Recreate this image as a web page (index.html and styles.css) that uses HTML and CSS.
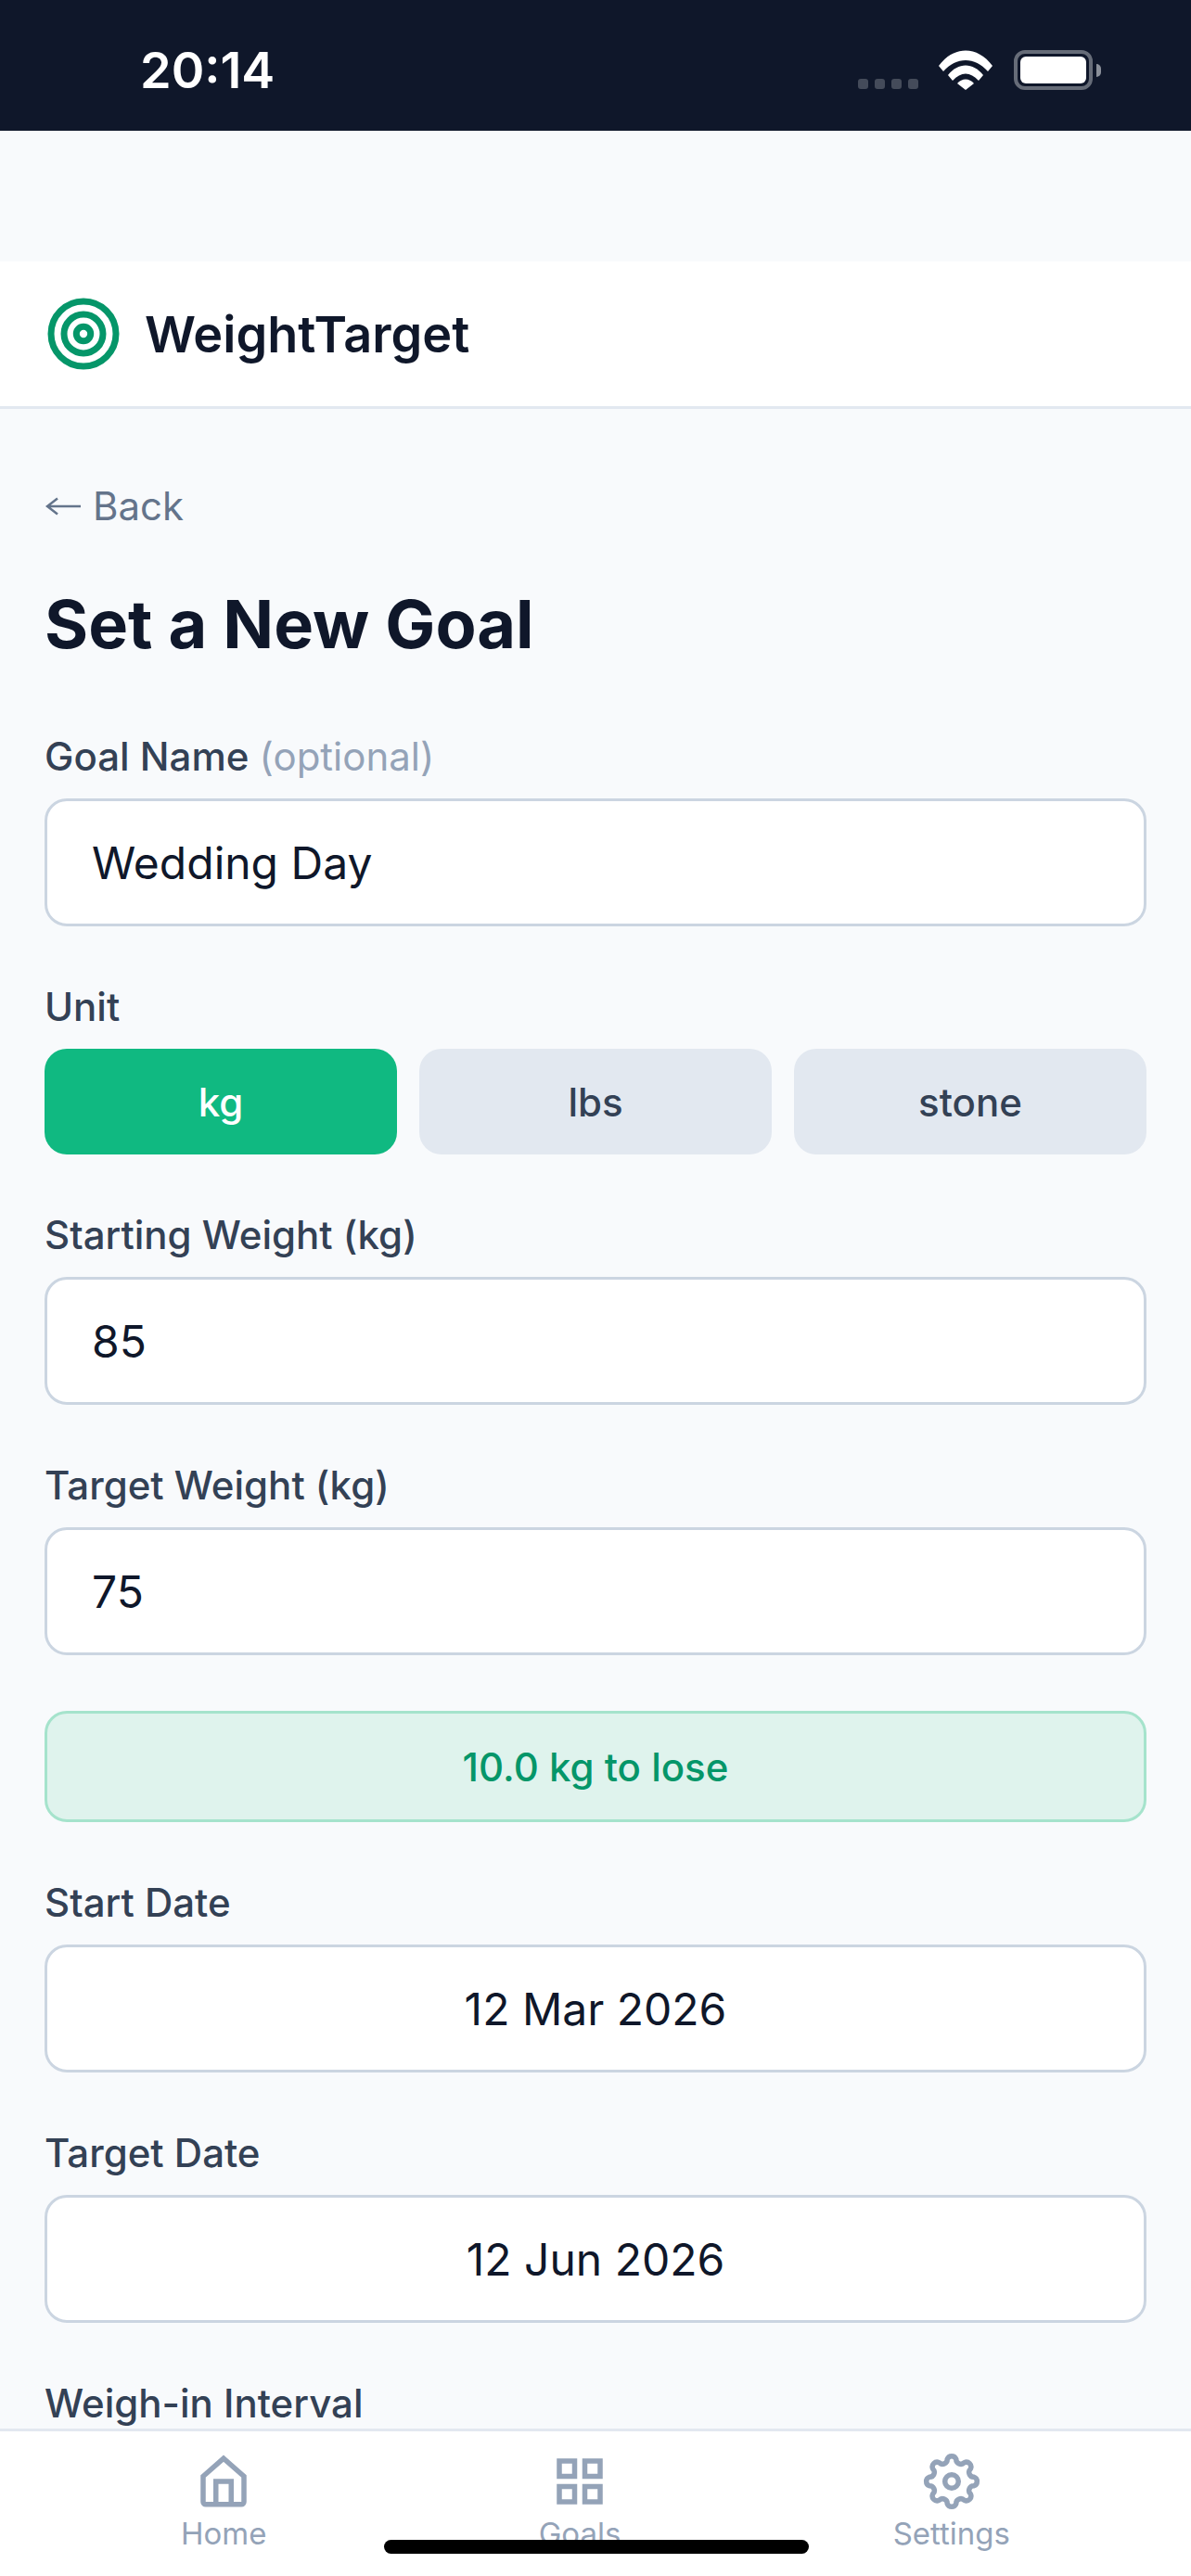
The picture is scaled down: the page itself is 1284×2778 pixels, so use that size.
FILE: index.html
```html
<!DOCTYPE html>
<html lang="en">
<head>
    <meta charset="UTF-8">
    <meta name="viewport" content="width=device-width, initial-scale=1.0">
    <title>WeightTarget</title>
    <link rel="stylesheet" href="styles.css">
</head>
<body>
    <div class="status-bar">
        <span class="time">20:14</span>
        <div class="status-icons">
            <div class="signal"><i></i><i></i><i></i><i></i></div>
            <svg class="wifi" width="58" height="43" viewBox="0 0 58 43">
                <path fill="#fff" d="M0 17 C16 -5 42 -5 58 17 L53 23 C39 7 19 7 5 23 Z"/>
                <path fill="#fff" d="M10 27 C21 13 37 13 48 27 L43 33 C34 23 24 23 15 33 Z"/>
                <path fill="#fff" d="M20 36 C25 30 33 30 38 36 L29 43 Z"/>
            </svg>
            <div class="battery"><div class="battery-fill"></div></div>
            <div class="battery-cap"></div>
        </div>
    </div>

    <div class="spacer"></div>

    <header class="app-header">
        <svg width="78" height="78" viewBox="0 0 78 78" fill="none" stroke="#059669" stroke-width="7">
            <circle cx="39" cy="39" r="35"/>
            <circle cx="39" cy="39" r="21"/>
            <circle cx="39" cy="39" r="7.7"/>
        </svg>
        <span class="brand">WeightTarget</span>
    </header>

    <main class="content">
        <a class="back-link">
            <svg class="back-arrow" width="38" height="20" viewBox="0 0 38 20">
                <path d="M38 10H2M13 1.5 2 10l11 8.5"/>
            </svg>
            Back
        </a>
        <h1>Set a New Goal</h1>

        <div class="field">
            <label>Goal Name <span class="muted">(optional)</span></label>
            <div class="input">Wedding Day</div>
        </div>

        <div class="field">
            <label>Unit</label>
            <div class="unit-group">
                <button class="unit active">kg</button>
                <button class="unit">lbs</button>
                <button class="unit">stone</button>
            </div>
        </div>

        <div class="field">
            <label>Starting Weight (kg)</label>
            <div class="input">85</div>
        </div>

        <div class="field">
            <label>Target Weight (kg)</label>
            <div class="input">75</div>
        </div>

        <div class="summary">10.0 kg to lose</div>

        <div class="field">
            <label>Start Date</label>
            <div class="input centered">12 Mar 2026</div>
        </div>

        <div class="field">
            <label>Target Date</label>
            <div class="input centered">12 Jun 2026</div>
        </div>

        <div class="field">
            <label>Weigh-in Interval</label>
        </div>
    </main>

    <nav class="tab-bar">
        <a class="tab">
            <svg class="tab-icon" viewBox="0 0 24 24">
                <path d="M4 10 12 3l8 7v10a1 1 0 0 1-1 1H5a1 1 0 0 1-1-1z"/>
                <path d="M9 21v-9h6v9"/>
            </svg>
            Home
        </a>
        <a class="tab">
            <svg class="tab-icon" viewBox="0 0 24 24">
                <rect x="4" y="4" width="6" height="6"/>
                <rect x="14" y="4" width="6" height="6"/>
                <rect x="4" y="14" width="6" height="6"/>
                <rect x="14" y="14" width="6" height="6"/>
            </svg>
            Goals
        </a>
        <a class="tab">
            <svg class="tab-icon" viewBox="0 0 24 24">
                <circle cx="12" cy="12" r="2.65"/>
                <path d="M20.729 10.264A1.85 1.85 0 0 1 20.729 13.736A1.85 1.85 0 0 0 19.4 16.945A1.85 1.85 0 0 1 16.945 19.4A1.85 1.85 0 0 0 13.736 20.729A1.85 1.85 0 0 1 10.264 20.729A1.85 1.85 0 0 0 7.055 19.4A1.85 1.85 0 0 1 4.6 16.945A1.85 1.85 0 0 0 3.271 13.736A1.85 1.85 0 0 1 3.271 10.264A1.85 1.85 0 0 0 4.6 7.055A1.85 1.85 0 0 1 7.055 4.6A1.85 1.85 0 0 0 10.264 3.271A1.85 1.85 0 0 1 13.736 3.271A1.85 1.85 0 0 0 16.945 4.6A1.85 1.85 0 0 1 19.4 7.055A1.85 1.85 0 0 0 20.729 10.264z"/>
            </svg>
            Settings
        </a>
    </nav>
    <div class="home-indicator"></div>
</body>
</html>
```

FILE: styles.css
```css
* {
    box-sizing: border-box;
}
body {
    margin: 0;
    height: 2778px;
    overflow: hidden;
    position: relative;
    display: flex;
    flex-direction: column;
    font-family: Inter, 'Noto Sans', sans-serif;
    background-color: #f8fafc;
    color: #0f172a;
}
.status-bar {
    height: 141px;
    flex-shrink: 0;
    background-color: #0f172a;
    display: flex;
    justify-content: space-between;
    padding: 0 97px 0 151px;
}
.time {
    color: #fff;
    font-size: 54px;
    font-weight: 600;
    line-height: 65px;
    padding-top: 43px;
}
.status-icons {
    display: flex;
    align-items: flex-start;
    padding-top: 54px;
}
.signal {
    display: flex;
    gap: 7px;
    margin: 31px 22px 0 0;
}
.signal i {
    width: 11px;
    height: 11px;
    border-radius: 3px;
    background-color: #444b5a;
}
.battery {
    width: 85px;
    height: 43px;
    margin-left: 23px;
    padding: 3px;
    border: 4px solid #666c78;
    border-radius: 12px;
}
.battery-fill {
    height: 100%;
    background-color: #fff;
    border-radius: 6px;
}
.battery-cap {
    width: 5px;
    height: 14px;
    margin: 15px 0 0 4px;
    background-color: #8a8f99;
    border-radius: 0 7px 7px 0;
}
.spacer {
    height: 141px;
    flex-shrink: 0;
}
.app-header {
    height: 159px;
    flex-shrink: 0;
    display: flex;
    align-items: center;
    gap: 27px;
    padding: 0 51px;
    background-color: #fff;
    border-bottom: 3px solid #e2e8f0;
}
.brand {
    font-size: 54px;
    font-weight: 600;
    color: #0f172a;
}
.content {
    flex: 1;
    min-height: 0;
    overflow: hidden;
    padding: 79px 48px 0;
}
.back-link {
    display: flex;
    align-items: center;
    gap: 13px;
    padding-left: 1px;
    font-size: 42px;
    line-height: 51px;
    color: #64748b;
}
.back-arrow {
    fill: none;
    stroke: #64748b;
    stroke-width: 2.5;
}
h1 {
    margin: 58px 0 74px;
    font-size: 72px;
    line-height: 87px;
    font-weight: 700;
    color: #0f172a;
}
.field {
    margin-top: 61px;
}
.field label {
    display: block;
    font-size: 42px;
    line-height: 51px;
    font-weight: 450;
    color: #334155;
    margin-bottom: 20px;
}
.muted {
    font-weight: 400;
    color: #94a3b8;
}
.input {
    height: 138px;
    padding: 0 48px;
    display: flex;
    align-items: center;
    font-size: 48px;
    color: #0f172a;
    background-color: #fff;
    border: 3px solid #cbd5e1;
    border-radius: 24px;
}
.centered {
    justify-content: center;
}
.unit-group {
    display: flex;
    gap: 24px;
}
.unit {
    flex: 1;
    height: 114px;
    border: none;
    border-radius: 24px;
    font-family: inherit;
    font-size: 42px;
    font-weight: 450;
    color: #334155;
    background-color: #e2e8f0;
}
.unit.active {
    color: #fff;
    background-color: #10b981;
}
.summary {
    margin-top: 60px;
    height: 120px;
    display: flex;
    align-items: center;
    justify-content: center;
    font-size: 42px;
    font-weight: 450;
    color: #059669;
    background-color: #dff3ed;
    border: 3px solid #a5e3cc;
    border-radius: 24px;
}
.tab-bar {
    height: 159px;
    flex-shrink: 0;
    display: flex;
    justify-content: space-between;
    padding: 21px 195px 0;
    background-color: #fff;
    border-top: 3px solid #e2e8f0;
}
.tab {
    display: flex;
    flex-direction: column;
    align-items: center;
    font-size: 33px;
    line-height: 40px;
    color: #94a3b8;
}
.tab-icon {
    width: 66px;
    height: 66px;
    margin-bottom: 3px;
    fill: none;
    stroke: #94a3b8;
    stroke-width: 2;
}
.home-indicator {
    position: absolute;
    left: 414px;
    bottom: 24px;
    width: 458px;
    height: 15px;
    background-color: #000;
    border-radius: 8px;
}
```
